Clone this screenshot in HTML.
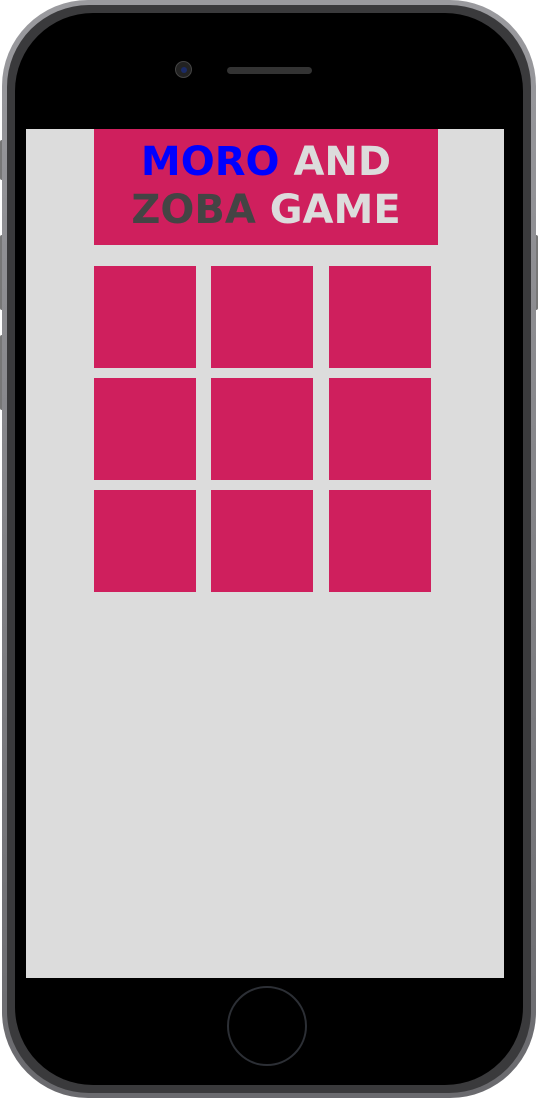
<!DOCTYPE html>
<html><head><style>
html,body{margin:0;padding:0;background:#fff;width:538px;height:1100px;overflow:hidden}
.phone{position:absolute;left:2px;top:0;width:534px;height:1098px;border-radius:86px;background:linear-gradient(#9a9a9e,#6a6a6e);}
.band{position:absolute;left:5px;top:5px;right:5px;bottom:5px;border-radius:82px;background:#3a3a3c}
.body{position:absolute;left:8px;top:8px;right:8px;bottom:8px;border-radius:78px;background:#000}
.btn{position:absolute;left:0;width:4px;background:#777;border-radius:2px}
.screen{position:absolute;left:26px;top:129px;width:478px;height:849px;background:#dcdcdc}
.head{position:absolute;left:68px;top:0;width:344px;height:116px;background:#cf1f5d;text-align:center;font-family:"DejaVu Sans","Liberation Sans",sans-serif;font-weight:bold;font-size:40px;line-height:48px;padding-top:9px;box-sizing:border-box;color:#dcdcdc}
.t{position:absolute;width:102px;height:102px;background:#cf1f5d}
</style></head><body>
<div class="btn" style="top:140px;height:40px"></div>
<div class="btn" style="top:235px;height:75px"></div>
<div class="btn" style="top:335px;height:75px"></div>
<div class="btn" style="left:534px;top:235px;height:75px"></div>
<div class="phone"><div class="band"><div class="body"></div></div></div>
<div style="position:absolute;left:175px;top:61px;width:17px;height:17px;border-radius:50%;background:#222;border:1px solid #444;box-sizing:border-box"><div style="margin:5px;width:6px;height:6px;border-radius:50%;background:#1a2a66"></div></div>
<div style="position:absolute;left:227px;top:67px;width:85px;height:7px;border-radius:4px;background:#333"></div>
<div style="position:absolute;left:227px;top:986px;width:80px;height:80px;border-radius:50%;border:2px solid #2c2f35;box-sizing:border-box"></div>
<div class="screen">
<div class="head"><span style="color:#0000ff">MORO</span> AND<br><span style="color:#444">ZOBA</span> GAME</div>
<div class="t" style="left:68px;top:137px"></div><div class="t" style="left:185px;top:137px"></div><div class="t" style="left:303px;top:137px"></div>
<div class="t" style="left:68px;top:249px"></div><div class="t" style="left:185px;top:249px"></div><div class="t" style="left:303px;top:249px"></div>
<div class="t" style="left:68px;top:361px"></div><div class="t" style="left:185px;top:361px"></div><div class="t" style="left:303px;top:361px"></div>
</div>
</body></html>
